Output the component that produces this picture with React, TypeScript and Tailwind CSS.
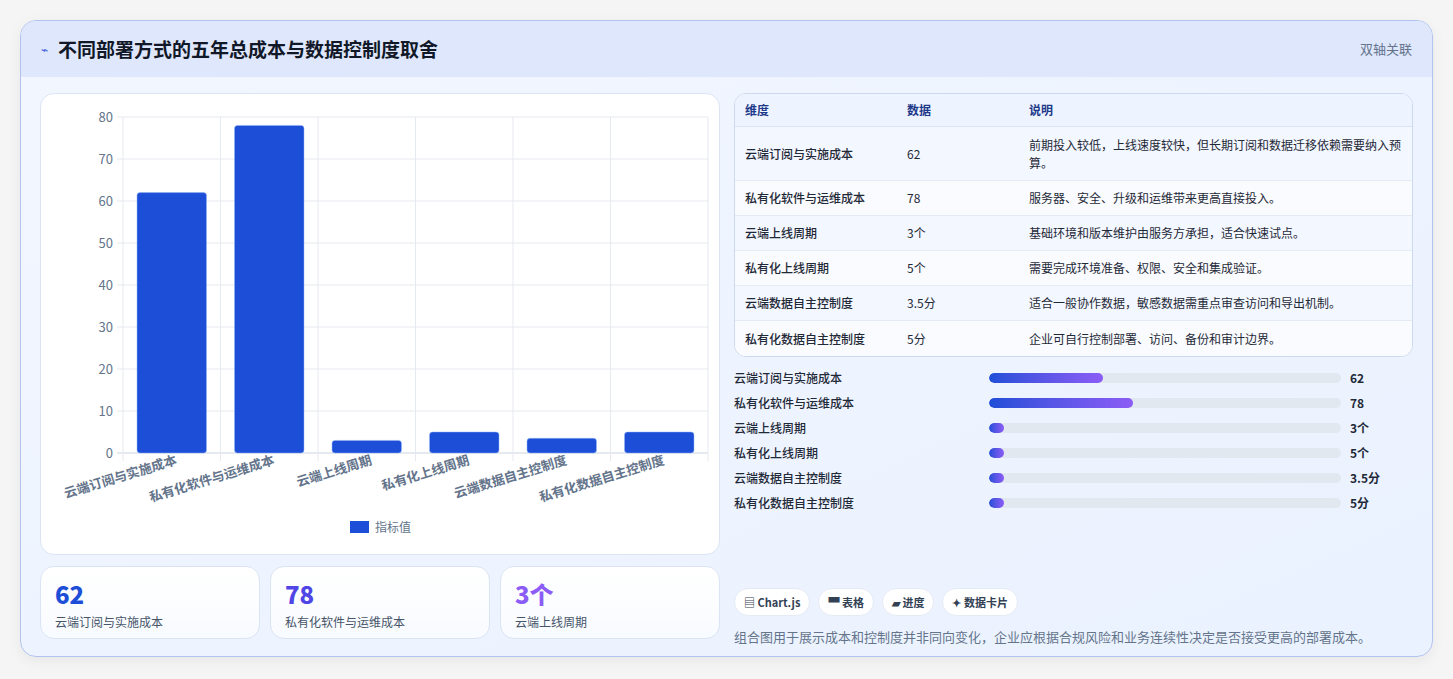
import React from "react";

const F = { fontFamily: '"Noto Sans CJK SC", "Noto Sans", sans-serif' };
const cats = ["云端订阅与实施成本", "私有化软件与运维成本", "云端上线周期", "私有化上线周期", "云端数据自主控制度", "私有化数据自主控制度"];
const vals = [62, 78, 3, 5, 3.5, 5];
const units = ["", "", "个", "个", "分", "分"];
const notes = [
  "前期投入较低，上线速度较快，但长期订阅和数据迁移依赖需要纳入预算。",
  "服务器、安全、升级和运维带来更高直接投入。",
  "基础环境和版本维护由服务方承担，适合快速试点。",
  "需要完成环境准备、权限、安全和集成验证。",
  "适合一般协作数据，敏感数据需重点审查访问和导出机制。",
  "企业可自行控制部署、访问、备份和审计边界。",
];
const fills = [32.5, 41, 4.3, 4.3, 4.3, 4.3];

function Chart() {
  const L = 122, R = 707, T = 115, B = 451;
  const cw = (R - L) / 6;
  const y = (v: number) => B - ((B - T) * v) / 80;
  return (
    <svg width="680" height="462" viewBox="40 92 680 462" style={F}>
      {[0, 10, 20, 30, 40, 50, 60, 70, 80].map((v) => (
        <g key={v}>
          <line x1={L - 6} x2={R} y1={y(v)} y2={y(v)} stroke={v === 0 ? "#cbd5e1" : "#e5e9f0"} />
          <text x={112} y={y(v) + 5} textAnchor="end" fontSize="13" fill="#64748b">{v}</text>
        </g>
      ))}
      {Array.from({ length: 7 }).map((_, i) => (
        <line key={i} x1={L + i * cw} x2={L + i * cw} y1={T} y2={B + 8} stroke="#e5e9f0" />
      ))}
      {vals.map((v, i) => (
        <rect key={i} x={L + i * cw + 14} y={y(v)} width={cw - 28} height={B - y(v)} rx="3" fill="#1d4ed8" stroke="#93b4f5" strokeWidth="0.5" />
      ))}
      {cats.map((c, i) => (
        <text key={c} x={L + i * cw + cw / 2 + 6} y={462} textAnchor="end" fontSize="13" fontWeight="600" fill="#64748b" transform={`rotate(-17 ${L + i * cw + cw / 2 + 6} 462)`}>{c}</text>
      ))}
      <rect x="349" y="519" width="19" height="12" fill="#1d4ed8" />
      <text x="374" y="530" fontSize="12" fill="#64748b">指标值</text>
    </svg>
  );
}

export default function App() {
  return (
    <div className="w-[1453px] h-[679px] bg-[#f5f5f6] pt-[20px] pl-[20px]" style={F}>
      <div className="w-[1413px] h-[637px] rounded-[16px] border border-[#b3c3ee] overflow-hidden bg-gradient-to-br from-[#f2f6ff] to-[#eaf2ff] shadow-[0_4px_14px_rgba(0,0,0,0.06)]">
        <div className="h-[56px] bg-[#dfe7fd] flex items-center justify-between px-[20px]">
          <div className="flex items-center gap-[10px]">
            <span className="text-[#3b5bdb] text-[12px]">⌁</span>
            <span className="text-[19px] font-bold text-[#111827]">不同部署方式的五年总成本与数据控制度取舍</span>
          </div>
          <span className="text-[13px] text-[#64748b]">双轴关联</span>
        </div>
        <div className="flex gap-[14px] px-[19px] pt-[16px]">
          <div className="w-[680px] flex flex-col gap-[11px]">
            <div className="h-[462px] bg-white rounded-[14px] border border-[#dbe4f3] overflow-hidden">
              <Chart />
            </div>
            <div className="flex gap-[10px]">
              {[["62", "text-[#1d4ed8]", 0], ["78", "text-[#4f46e5]", 1], ["3个", "text-[#8b5cf6]", 2]].map(([v, c, i]) => (
                <div key={v as string} className="w-[220px] h-[73px] rounded-[14px] border border-[#dbe4f3] bg-gradient-to-b from-white to-[#f8fbff] px-[14px] pt-[10px]">
                  <div className={`text-[24px] font-extrabold leading-[34px] ${c}`}>{v}</div>
                  <div className="text-[12px] text-[#475569] mt-[2px]">{cats[i as number]}</div>
                </div>
              ))}
            </div>
          </div>
          <div className="w-[680px] flex flex-col">
            <div className="rounded-[12px] border border-[#cdd9ee] overflow-hidden bg-white text-[12px]">
              <div className="flex h-[33px] items-center bg-[#eef4ff] border-b border-[#dbe4f3] font-bold text-[#1e3a8a]">
                <div className="w-[172px] pl-[10px]">维度</div>
                <div className="w-[122px]">数据</div>
                <div className="flex-1">说明</div>
              </div>
              {cats.map((c, i) => (
                <div key={c} className={`flex items-center border-b border-[#e5ebf5] last:border-b-0 text-[#1f2937] ${i === 0 ? "h-[54px]" : "h-[35px]"} ${i % 2 === 0 ? "bg-[#f3f7ff]" : "bg-[#f9fbfe]"}`}>
                  <div className="w-[172px] pl-[10px] font-medium">{c}</div>
                  <div className="w-[122px]">{vals[i]}{units[i]}</div>
                  <div className="flex-1 pr-[10px] leading-[18px]">{notes[i]}</div>
                </div>
              ))}
            </div>
            <div className="mt-[11px] flex flex-col gap-[6px]">
              {cats.map((c, i) => (
                <div key={c} className="flex items-center h-[19px] text-[12px] text-[#1f2937]">
                  <div className="w-[255px] font-medium">{c}</div>
                  <div className="w-[352px] h-[10px] rounded-full bg-[#e2e8f0] overflow-hidden">
                    <div className="h-full rounded-full bg-gradient-to-r from-[#1d4ed8] to-[#8b5cf6]" style={{ width: `${fills[i]}%` }} />
                  </div>
                  <div className="ml-[9px] font-bold">{vals[i]}{units[i]}</div>
                </div>
              ))}
            </div>
            <div className="flex gap-[8px] mt-[76px]">
              {["▤ Chart.js", "▀ 表格", "▰ 进度", "✦ 数据卡片"].map((t) => (
                <span key={t} className="h-[28px] px-[9px] flex items-center rounded-full bg-white border border-[#e5ebf5] text-[11px] font-bold text-[#334155]">{t}</span>
              ))}
            </div>
            <div className="mt-[11px] text-[13px] text-[#64748b]">组合图用于展示成本和控制度并非同向变化，企业应根据合规风险和业务连续性决定是否接受更高的部署成本。</div>
          </div>
        </div>
      </div>
    </div>
  );
}
